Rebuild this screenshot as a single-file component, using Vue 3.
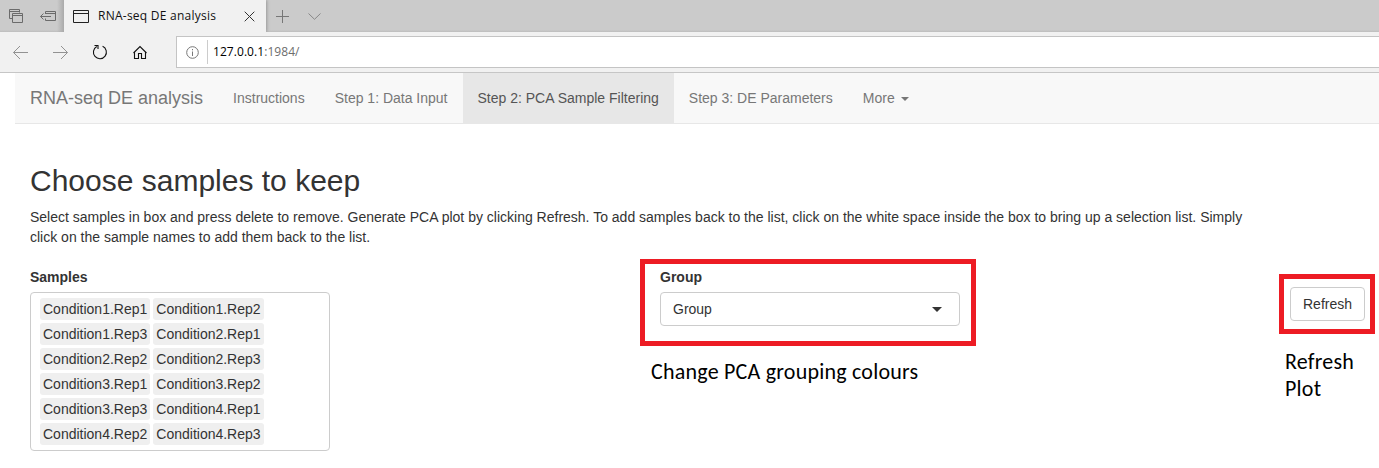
<script setup>
const navItems = [
  { label: 'Instructions' },
  { label: 'Step 1: Data Input' },
  { label: 'Step 2: PCA Sample Filtering', active: true },
  { label: 'Step 3: DE Parameters' },
  { label: 'More', caret: true },
]
const samples = [1, 2, 3, 4].flatMap((c) => [1, 2, 3].map((r) => `Condition${c}.Rep${r}`))
</script>

<template>
  <div class="page">
    <div class="tabbar">
      <div class="tab-tools">
        <svg width="64" height="32" viewBox="0 0 64 32" fill="none" stroke="#6b6b6b">
          <path d="M12.500 18.500H9.500V9.500H19.500V12.500M9.500 11.500H19.500" />
          <path d="M12.500 13.500H22.500V22.500H12.500ZM12.500 15.500H22.500" />
          <path d="M45.500 14V11.500H55.500V20.500H45.500V18.500M45.500 13.500H55.500M40.500 16.500H51M43.500 13.500L40.500 16.500L43.500 19.500" />
        </svg>
      </div>
      <div class="tab">
        <svg class="win-icon" width="16" height="14" viewBox="0 0 16 14" fill="none" stroke="#222">
          <path d="M.5.5H15.500V12.500H.5ZM.5 3.500H15.500" />
        </svg>
        <span class="tab-title">RNA-seq DE analysis</span>
        <svg class="close" width="11" height="11" viewBox="0 0 11 11" fill="none" stroke="#333">
          <path d="M.7.7L10.300 10.300M10.300.7L.7 10.300" />
        </svg>
      </div>
      <svg width="62" height="32" viewBox="266 0 62 32" fill="none" stroke="#777">
        <path d="M276 16.500H289M282.500 10V23" />
        <path d="M308.500 13.500L314.500 19.300L320.500 13.500" stroke="#888" />
      </svg>
    </div>

    <div class="toolbar">
      <svg width="176" height="40" viewBox="0 32 176 40" fill="none">
        <g stroke="#929292">
          <path d="M13.500 52.500H28M20 46L13.500 52.500L20 59" />
          <path d="M53 52.500H67.500M61 46L67.500 52.500L61 59" />
        </g>
        <path d="M102.600 46.300A6.500 6.500 0 1 1 96.800 46.500M94.500 45.500H98V49" stroke="#111" stroke-width="1.100" />
        <path d="M133.500 53L140 46.500L146.500 53M134.500 52V58.500H138.500V53.500H141.500V58.500H145.500V52" stroke="#111" stroke-width="1.100" />
      </svg>
      <div class="address">
        <svg width="13" height="13" viewBox="0 0 13 13" fill="none" stroke="#777">
          <circle cx="6.500" cy="6.500" r="5.800" />
          <path d="M6.500 5.500V10M6.500 3V4.300" />
        </svg>
        <span class="divider"></span>
        <span class="url"><b>127.0.0.1</b>:1984/</span>
      </div>
    </div>

    <nav class="navbar">
      <span class="brand">RNA-seq DE analysis</span>
      <span v-for="item in navItems" :key="item.label" class="nav-item" :class="{ active: item.active }">
        {{ item.label }}<i v-if="item.caret" class="caret"></i>
      </span>
    </nav>

    <main>
      <h2>Choose samples to keep</h2>
      <p>
        Select samples in box and press delete to remove. Generate PCA plot by clicking Refresh. To add samples back to the list, click on the white space inside the box to bring up a selection list. Simply click on the sample names to add them back to the list.
      </p>
      <div class="controls">
        <section class="samples">
          <label>Samples</label>
          <div class="sample-box">
            <span v-for="s in samples" :key="s" class="tag">{{ s }}</span>
          </div>
        </section>
        <section class="group">
          <div class="highlight group-frame">
            <label>Group</label>
            <div class="select"><span>Group</span><i class="caret"></i></div>
          </div>
          <div class="note group-note">Change PCA grouping colours</div>
        </section>
        <section class="refresh">
          <div class="highlight refresh-frame"><button>Refresh</button></div>
          <div class="note refresh-note">Refresh<br />Plot</div>
        </section>
      </div>
    </main>
  </div>
</template>

<style>
body { margin: 0; background: #fff; overflow: hidden; }
</style>

<style scoped>
* { box-sizing: border-box; }
.page { width: 1379px; height: 468px; overflow: hidden; background: #fff; font: 14px/20px "Liberation Sans", Arial, sans-serif; color: #333; }
svg { display: block; flex: none; }
.tabbar { display: flex; height: 32px; background: linear-gradient(#cbcbcb 30px, #bdbdbd); }
.tab-tools { width: 64px; background: linear-gradient(90deg, transparent 57px, #aaa); }
.tab { display: flex; align-items: center; width: 202px; padding: 0 11px 0 9px; background: #f1f1f1; color: #111; box-shadow: 1px 0 3px #999; clip-path: inset(0 -5px 0 0); }
.win-icon { margin-top: 1px; }
.tab-title { margin-left: 9px; font: 12px/16px "Open Sans", "Noto Sans", sans-serif; white-space: nowrap; letter-spacing: 0.25px; }
.close { margin-left: auto; }
.toolbar { display: flex; height: 41px; background: #f1f1f1; border-bottom: 1px solid #c6c6c6; }
.address { display: flex; align-items: center; flex: 1; height: 32px; margin-top: 4px; padding-left: 9px; background: #fff; border: 1px solid #c4c4c4; border-right: 0; }
.divider { width: 1px; height: 24px; margin-left: 8px; background: #ccc; }
.url { margin-left: 5px; font: 12px/16px "Open Sans", "Noto Sans", sans-serif; letter-spacing: 0.06px; color: #6d6d6d; }
.url b { font-weight: 400; color: #000; }
.navbar { display: flex; height: 51px; margin-left: 15px; background: #f8f8f8; border-bottom: 1px solid #e7e7e7; color: #777; }
.brand { padding: 15px; font-size: 18px; }
.nav-item { height: 51px; padding: 15px; white-space: nowrap; }
.active { background: #e7e7e7; color: #555; }
.caret { display: inline-block; width: 0; height: 0; border: 4px solid transparent; border-top-color: currentColor; border-bottom: 0; }
.nav-item .caret { margin-left: 6px; vertical-align: middle; }
main { padding: 40px 0 0 30px; }
h2 { margin: 0; font-size: 30px; line-height: 33px; font-weight: 400; }
p { width: 1230px; margin: 10px 0 0; }
.controls { display: flex; align-items: flex-start; margin-top: 12px; }
label { display: block; font-weight: 700; line-height: 20px; }
.samples { width: 300px; margin-top: 8px; }
.sample-box { display: flex; flex-wrap: wrap; align-content: flex-start; gap: 3px; height: 159px; margin-top: 5px; padding: 5px 60px 0 9px; border: 1px solid #ccc; border-radius: 4px; }
.tag { height: 22px; padding: 1px 3px; border-radius: 3px; background: #efefef; white-space: nowrap; }
.group { width: 336px; margin-left: 310px; }
.highlight { border: 5px solid #ed1c24; }
.group-frame { height: 87px; padding: 3px 11px 0 15px; }
.select { display: flex; align-items: center; justify-content: space-between; height: 34px; margin-top: 5px; padding: 0 17px 0 12px; width: 300px; border: 1px solid #ccc; border-radius: 4px; }
.select .caret { border-width: 5px 5px 0; }
.note { color: #000; font-family: Carlito, Lato, sans-serif; font-size: 21px; letter-spacing: 0.65px; line-height: 27px; white-space: nowrap; }
.note { font-size: 22px; letter-spacing: 0.22px; }
.group-note { margin: 12px 0 0 11px; }
.refresh { width: 96px; margin: 15px 0 0 303px; }
.refresh-frame { height: 60px; padding: 8px 0 0 6px; }
button { display: block; width: 75px; height: 34px; padding: 0; border: 1px solid #ccc; border-radius: 4px; background: #fff; color: #333; font: inherit; }
.refresh-note { margin: 14px 0 0 6px; }
</style>
